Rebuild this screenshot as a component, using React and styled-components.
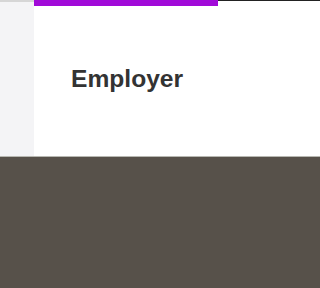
import React from "react";
import styled, { createGlobalStyle } from "styled-components";

const Global = createGlobalStyle`
  html, body { margin: 0; padding: 0; }
  body { background: #57514a; font-family: "Liberation Sans", Arial, sans-serif; }
`;

const Page = styled.div`
  width: 100%;
  height: 100vh;
  display: flex;
  flex-direction: column;
  overflow: hidden;
`;

const Top = styled.div`
  height: 156px;
  display: flex;
  background: #fff;
  border-bottom: 1px solid #b8b8b2;
`;

const Sidebar = styled.div`
  width: 34px;
  background: #f4f4f6;
  border-top: 2px solid #d6d6d6;
`;

const Main = styled.div`
  flex: 1;
  display: flex;
  flex-direction: column;
`;

const Strip = styled.div`
  display: flex;
  height: 6px;
`;

const Progress = styled.div`
  width: 184px;
  background: #a10ad8;
`;

const Rest = styled.div`
  flex: 1;
  border-top: 1px solid #222;
`;

const Title = styled.h1`
  margin: 58px 0 0 37px;
  font-size: 24.6px;
  font-weight: 700;
  color: #333;
  line-height: 30px;
`;

const Shade = styled.div`
  flex: 1;
  background: #57514a;
`;

export default function App() {
  return (
    <Page>
      <Global />
      <Top>
        <Sidebar />
        <Main>
          <Strip>
            <Progress />
            <Rest />
          </Strip>
          <Title>Employer</Title>
        </Main>
      </Top>
      <Shade />
    </Page>
  );
}
